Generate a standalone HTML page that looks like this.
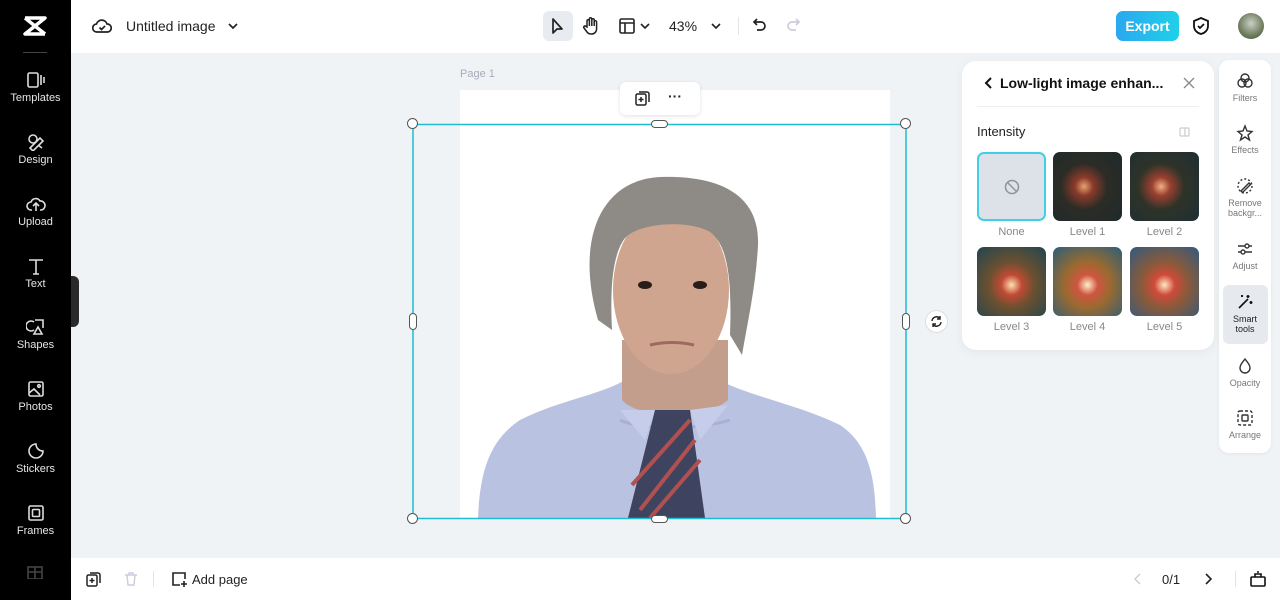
<!DOCTYPE html>
<html><head><meta charset="utf-8"><style>
*{box-sizing:border-box;margin:0;padding:0}
body{width:1280px;height:600px;overflow:hidden;font-family:"Liberation Sans",sans-serif;background:#f0f3f6;position:relative;color:#1f2329}
.abs{position:absolute}
.side{left:0;top:0;width:71px;height:600px;background:#000}
.si{position:absolute;left:0;width:71px;text-align:center;color:#e6e6e6;font-size:11px}
.si svg{display:block;margin:0 auto 3px}
.top{left:71px;top:0;width:1209px;height:53px;background:#fff}
.bot{left:71px;top:558px;width:1209px;height:42px;background:#fff}
.rp{left:1219px;top:60px;width:52px;height:393px;background:#fff;border-radius:10px;box-shadow:0 1px 4px rgba(0,0,0,.06)}
.ri{position:absolute;left:0;width:52px;text-align:center;font-size:9px;color:#777;line-height:10px}
.ri svg{display:block;margin:0 auto 3px}
.panel{left:962px;top:61px;width:252px;height:289px;background:#fff;border-radius:14px;box-shadow:0 2px 10px rgba(0,0,0,.06)}
.th{position:absolute;width:69px;height:69px;border-radius:7px;overflow:hidden}
.lbl{position:absolute;width:69px;text-align:center;font-size:11px;color:#888}
.h{position:absolute;width:11px;height:11px;border-radius:50%;background:#fff;border:1px solid #555}
</style></head><body>
<div class="abs side">
 <svg class="abs" style="left:22px;top:15px" width="26" height="22" viewBox="0 0 26 22"><path d="M3 3h20L3 19h20M3 3l20 16" stroke="#fff" stroke-width="3.5" fill="none" stroke-linejoin="round"/></svg>
 <div class="abs" style="left:23px;top:52px;width:24px;height:1px;background:#444"></div>
 <div class="si" style="top:71px"><svg width="20" height="18" viewBox="0 0 20 18" fill="none" stroke="#ddd" stroke-width="1.6"><rect x="2" y="2" width="10" height="14" rx="1.5"/><path d="M15 4v10M18 6v6"/></svg>Templates</div>
 <div class="si" style="top:133px"><svg width="20" height="18" viewBox="0 0 20 18" fill="none" stroke="#ddd" stroke-width="1.6"><circle cx="7" cy="6" r="4"/><path d="M4 15l10-10 3 3-10 10zM12 12l4 3"/></svg>Design</div>
 <div class="si" style="top:195px"><svg width="20" height="18" viewBox="0 0 20 18" fill="none" stroke="#ddd" stroke-width="1.6"><path d="M6 15H5a4 4 0 010-8 5 5 0 019-1 4 4 0 011 9h-1M10 16V9M7 11l3-3 3 3"/></svg>Upload</div>
 <div class="si" style="top:257px"><svg width="20" height="18" viewBox="0 0 20 18" fill="none" stroke="#ddd" stroke-width="1.6"><path d="M3 3h14M10 3v14M7 17h6"/></svg>Text</div>
 <div class="si" style="top:318px"><svg width="20" height="18" viewBox="0 0 20 18" fill="none" stroke="#ddd" stroke-width="1.6"><path d="M8 4a5 5 0 100 8M9 2h8v8M12 9l-4 7h8z"/></svg>Shapes</div>
 <div class="si" style="top:380px"><svg width="20" height="18" viewBox="0 0 20 18" fill="none" stroke="#ddd" stroke-width="1.6"><rect x="3" y="2" width="14" height="14" rx="1.5"/><path d="M3 13l5-4 6 6"/><circle cx="13" cy="6" r="1.3"/></svg>Photos</div>
 <div class="si" style="top:442px"><svg width="20" height="18" viewBox="0 0 20 18" fill="none" stroke="#ddd" stroke-width="1.6"><path d="M17 9a7 7 0 11-7-7c0 4 3 7 7 7z"/></svg>Stickers</div>
 <div class="si" style="top:504px"><svg width="20" height="18" viewBox="0 0 20 18" fill="none" stroke="#ddd" stroke-width="1.6"><rect x="3" y="2" width="14" height="14" rx="1.5"/><rect x="6.5" y="5.5" width="7" height="7" rx="1"/></svg>Frames</div>
 <svg class="abs" style="left:26px;top:565px" width="18" height="14" viewBox="0 0 18 14" fill="none" stroke="#444" stroke-width="1.6"><rect x="2" y="2" width="14" height="12"/><path d="M9 2v12M2 7h14"/></svg>
</div>
<div class="abs" style="left:71px;top:276px;width:8px;height:51px;background:#2a2a2a;border-radius:0 6px 6px 0"></div>

<div class="abs top">
 <svg class="abs" style="left:21px;top:17px" width="20" height="18" viewBox="0 0 20 18" fill="none" stroke="#222" stroke-width="1.7"><path d="M5 15a4 4 0 01-.5-8 5.5 5.5 0 0110.5 0 4 4 0 01.5 8z"/><path d="M7.5 10.5l2 2 3.5-3.5"/></svg>
 <div class="abs" style="left:55px;top:18px;font-size:14px;color:#222">Untitled image</div>
 <svg class="abs" style="left:156px;top:20px" width="12" height="12" viewBox="0 0 12 12"><path d="M2 4l4 4 4-4" stroke="#222" stroke-width="1.7" fill="none"/></svg>
 <div class="abs" style="left:472px;top:11px;width:30px;height:30px;background:#e8ecf0;border-radius:6px"></div>
 <svg class="abs" style="left:478px;top:16px" width="18" height="20" viewBox="0 0 18 20"><path d="M4 3v14l4-4 5 0z" stroke="#222" stroke-width="1.7" fill="none" stroke-linejoin="round"/></svg>
 <svg class="abs" style="left:511px;top:16px" width="18" height="20" viewBox="0 0 18 20" fill="none" stroke="#222" stroke-width="1.5"><path d="M5 11V5a1.2 1.2 0 012.4 0v5V3a1.2 1.2 0 012.4 0v7V4a1.2 1.2 0 012.4 0v6V6a1.2 1.2 0 012.4 0v7a5 5 0 01-5 5H9a5 5 0 01-4-2l-3-4a1.2 1.2 0 012-1.5z"/></svg>
 <svg class="abs" style="left:547px;top:17px" width="18" height="18" viewBox="0 0 18 18" fill="none" stroke="#222" stroke-width="1.6"><rect x="2" y="2" width="14" height="14" rx="1.5"/><path d="M2 6h14M7 6v10"/></svg>
 <svg class="abs" style="left:568px;top:20px" width="12" height="12" viewBox="0 0 12 12"><path d="M2 4l4 4 4-4" stroke="#222" stroke-width="1.6" fill="none"/></svg>
 <div class="abs" style="left:598px;top:18px;font-size:14px;color:#222">43%</div>
 <svg class="abs" style="left:639px;top:20px" width="12" height="12" viewBox="0 0 12 12"><path d="M2 4l4 4 4-4" stroke="#222" stroke-width="1.6" fill="none"/></svg>
 <div class="abs" style="left:667px;top:17px;width:1px;height:18px;background:#e2e4e8"></div>
 <svg class="abs" style="left:680px;top:16px" width="18" height="18" viewBox="0 0 18 18" fill="none" stroke="#222" stroke-width="1.7"><path d="M6 3L3 6l3 3M3 6h7a4 4 0 010 8H6"/></svg>
 <svg class="abs" style="left:713px;top:16px" width="18" height="18" viewBox="0 0 18 18" fill="none" stroke="#ccd" stroke-width="1.7"><path d="M12 3l3 3-3 3M15 6H8a4 4 0 000 8h4"/></svg>
 <div class="abs" style="left:1045px;top:11px;width:63px;height:30px;border-radius:7px;background:linear-gradient(90deg,#2aa8f0,#20d0e8);color:#fff;font-weight:bold;font-size:14px;text-align:center;line-height:30px">Export</div>
 <svg class="abs" style="left:1120px;top:16px" width="20" height="20" viewBox="0 0 20 20" fill="none" stroke="#111" stroke-width="1.8"><path d="M10 2l7 3v5c0 4-3 7-7 8-4-1-7-4-7-8V5z"/><path d="M7 10l2 2 4-4"/></svg>
 <div class="abs" style="left:1167px;top:13px;width:26px;height:26px;border-radius:50%;background:radial-gradient(circle at 50% 40%,#c9d0c4,#6f7d5e 60%,#44503a)"></div>
</div>

<div class="abs" style="left:460px;top:68px;font-size:11px;color:#aab">Page 1</div>
<div class="abs" style="left:460px;top:90px;width:430px;height:428px;background:#fff"></div>
<svg class="abs" style="left:0;top:0" width="1280" height="600" viewBox="0 0 1280 600">
 <path d="M478 518 C480 470 490 440 520 420 C560 400 600 395 625 380 L720 380 C745 395 800 405 840 425 C870 445 875 480 876 518 Z" fill="#b9c2e0"/>
 <path d="M620 420 C640 430 700 430 730 420" stroke="#a9b1d2" stroke-width="3" fill="none"/>
 <path d="M622 340 L622 400 C640 420 705 420 728 400 L728 340 Z" fill="#c49e8c"/>
 <ellipse cx="671" cy="290" rx="58" ry="84" fill="#d0a58f"/>
 <path d="M598 320 C575 240 600 180 660 177 C720 175 760 195 758 245 C756 285 748 320 742 355 L730 335 C732 280 728 245 710 232 C690 220 640 222 625 238 C612 255 610 290 612 330 Z" fill="#8e8a85"/>
 <path d="M655 410 L690 410 L705 518 L628 518 Z" fill="#3e4460"/>
 <path d="M640 510 L695 440 M650 518 L700 460 M632 485 L690 420" stroke="#b05050" stroke-width="4"/>
 <path d="M620 410 L655 410 L645 440 Z M690 410 L728 405 L700 440 Z" fill="#c6cdea"/>
 <ellipse cx="645" cy="285" rx="7" ry="4" fill="#2a1c18"/><ellipse cx="700" cy="285" rx="7" ry="4" fill="#2a1c18"/>
 <path d="M650 345 Q672 340 694 345" stroke="#9c6b5d" stroke-width="3" fill="none"/>
 <rect x="413" y="124.5" width="493" height="394" fill="none" stroke="#1fbcd2" stroke-width="1.5"/>
</svg>
<div class="h" style="left:407px;top:118px"></div><div class="h" style="left:900px;top:118px"></div>
<div class="h" style="left:407px;top:513px"></div><div class="h" style="left:900px;top:513px"></div>
<div class="abs" style="left:651px;top:120px;width:17px;height:8px;border-radius:4px;background:#fff;border:1px solid #555"></div>
<div class="abs" style="left:651px;top:515px;width:17px;height:8px;border-radius:4px;background:#fff;border:1px solid #555"></div>
<div class="abs" style="left:409px;top:313px;width:8px;height:17px;border-radius:4px;background:#fff;border:1px solid #555"></div>
<div class="abs" style="left:902px;top:313px;width:8px;height:17px;border-radius:4px;background:#fff;border:1px solid #555"></div>
<div class="abs" style="left:925px;top:310px;width:23px;height:23px;border-radius:50%;background:#fff;border:1px solid #ddd"></div>
<svg class="abs" style="left:929px;top:314px" width="15" height="15" viewBox="0 0 15 15" fill="none" stroke="#222" stroke-width="1.4"><path d="M3 7a4.5 4.5 0 018-2.5M12 8a4.5 4.5 0 01-8 2.5M11 2v3H8M4 13v-3h3"/></svg>
<div class="abs" style="left:620px;top:82px;width:80px;height:33px;background:#fff;border-radius:6px;box-shadow:0 1px 4px rgba(0,0,0,.12)"></div>
<svg class="abs" style="left:634px;top:89px" width="18" height="18" viewBox="0 0 18 18" fill="none" stroke="#222" stroke-width="1.5"><rect x="2" y="5" width="10" height="11" rx="1.5"/><path d="M5 3h8a2 2 0 012 2v8M7 8v5M4.5 10.5h5"/></svg>
<div class="abs" style="left:668px;top:88px;font-size:14px;font-weight:bold">···</div>

<div class="abs panel">
 <svg class="abs" style="left:21px;top:15px" width="12" height="14" viewBox="0 0 12 14"><path d="M8 2L3 7l5 5" stroke="#111" stroke-width="2" fill="none"/></svg>
 <div class="abs" style="left:38px;top:14px;font-size:14px;font-weight:bold;color:#111">Low-light image enhan...</div>
 <svg class="abs" style="left:221px;top:16px" width="12" height="12" viewBox="0 0 12 12"><path d="M1 1l10 10M11 1L1 11" stroke="#888" stroke-width="1.3"/></svg>
 <div class="abs" style="left:15px;top:45px;width:222px;height:1px;background:#eceef0"></div>
 <div class="abs" style="left:15px;top:63px;font-size:13px;color:#222">Intensity</div>
 <svg class="abs" style="left:216px;top:64px" width="14" height="14" viewBox="0 0 14 14" fill="none" stroke="#ccc" stroke-width="1.2"><rect x="2" y="3" width="9" height="8" rx="1"/><path d="M7 3v8"/></svg>
 <div class="th" style="left:15px;top:91px;background:#dde2e8;border:2px solid #3ed0e6"><svg style="position:absolute;left:24px;top:24px" width="18" height="18" viewBox="0 0 18 18" fill="none" stroke="#8b939e" stroke-width="1.5"><circle cx="9" cy="9" r="6.5"/><path d="M4.5 4.5l9 9"/></svg></div>
 <div class="th" style="left:91px;top:91px;background:radial-gradient(circle at 45% 50%,#e8a070 0,#8a3a2a 18%,#2c2c26 45%,#1e2a2c 100%)"></div>
 <div class="th" style="left:168px;top:91px;background:radial-gradient(circle at 45% 50%,#f0b080 0,#9a4030 18%,#2e3328 45%,#1e2e33 100%)"></div>
 <div class="th" style="left:15px;top:186px;background:radial-gradient(circle at 50% 55%,#ffe0b0 0,#c04a34 20%,#6a5030 45%,#1f4650 100%)"></div>
 <div class="th" style="left:91px;top:186px;background:radial-gradient(circle at 50% 55%,#fff0c8 0,#d05540 20%,#9a6a30 45%,#2a5e78 100%)"></div>
 <div class="th" style="left:168px;top:186px;background:radial-gradient(circle at 50% 55%,#ffe8c0 0,#d04a3a 20%,#8a5a3a 45%,#305a80 100%)"></div>
 <div class="lbl" style="left:15px;top:165px">None</div><div class="lbl" style="left:91px;top:165px">Level 1</div><div class="lbl" style="left:168px;top:165px">Level 2</div>
 <div class="lbl" style="left:15px;top:260px">Level 3</div><div class="lbl" style="left:91px;top:260px">Level 4</div><div class="lbl" style="left:168px;top:260px">Level 5</div>
</div>

<div class="abs rp">
 <div class="ri" style="top:12px"><svg width="18" height="18" viewBox="0 0 18 18" fill="none" stroke="#333" stroke-width="1.4"><circle cx="9" cy="6" r="4"/><circle cx="6" cy="11" r="4"/><circle cx="12" cy="11" r="4"/></svg>Filters</div>
 <div class="ri" style="top:64px"><svg width="18" height="18" viewBox="0 0 18 18" fill="none" stroke="#333" stroke-width="1.4"><path d="M9 2l2 5 5 .5-4 3.5 1.5 5L9 13l-4.5 3L6 11 2 7.5 7 7z"/></svg>Effects</div>
 <div class="ri" style="top:117px"><svg width="18" height="18" viewBox="0 0 18 18" fill="none" stroke="#333" stroke-width="1.4"><circle cx="9" cy="9" r="7" stroke-dasharray="2 2"/><path d="M5 14l8-8 1.5 1.5-8 8z"/></svg>Remove<br>backgr...</div>
 <div class="ri" style="top:180px"><svg width="18" height="18" viewBox="0 0 18 18" fill="none" stroke="#333" stroke-width="1.4"><path d="M2 6h14M2 12h14"/><circle cx="11" cy="6" r="2" fill="#fff"/><circle cx="7" cy="12" r="2" fill="#fff"/></svg>Adjust</div>
 <div class="abs" style="left:4px;top:225px;width:45px;height:59px;background:#e6eaee;border-radius:6px"></div>
 <div class="ri" style="top:233px"><svg width="18" height="18" viewBox="0 0 18 18" fill="none" stroke="#111" stroke-width="1.6"><path d="M3 15l9-9"/><path d="M12 2v3M10.5 3.5h3M15 8v3M13.5 9.5h3M6 2v2M5 3h2"/></svg><span style="color:#222">Smart<br>tools</span></div>
 <div class="ri" style="top:297px"><svg width="18" height="18" viewBox="0 0 18 18" fill="none" stroke="#333" stroke-width="1.4"><path d="M9 2c3 4 5 6 5 9a5 5 0 01-10 0c0-3 2-5 5-9z"/></svg>Opacity</div>
 <div class="ri" style="top:349px"><svg width="18" height="18" viewBox="0 0 18 18" fill="none" stroke="#333" stroke-width="1.4"><rect x="2" y="2" width="14" height="14" rx="2" stroke-dasharray="3 2"/><rect x="6" y="6" width="6" height="6" rx="1"/></svg>Arrange</div>
</div>

<div class="abs bot">
 <svg class="abs" style="left:14px;top:12px" width="18" height="18" viewBox="0 0 18 18" fill="none" stroke="#222" stroke-width="1.5"><rect x="2" y="5" width="10" height="11" rx="1.5"/><path d="M5 3h8a2 2 0 012 2v8M7 8v5M4.5 10.5h5"/></svg>
 <svg class="abs" style="left:52px;top:13px" width="16" height="16" viewBox="0 0 16 16" fill="none" stroke="#ccd" stroke-width="1.4"><path d="M2 4h12M6 4V2h4v2M4 4l1 10h6l1-10"/></svg>
 <div class="abs" style="left:82px;top:13px;width:1px;height:16px;background:#e2e4e8"></div>
 <svg class="abs" style="left:99px;top:12px" width="18" height="18" viewBox="0 0 18 18" fill="none" stroke="#222" stroke-width="1.6"><path d="M10 15H3V3h12v6M14 11v6M11 14h6"/></svg>
 <div class="abs" style="left:121px;top:14px;font-size:13px;color:#222">Add page</div>
 <svg class="abs" style="left:1061px;top:13px" width="12" height="16" viewBox="0 0 12 16"><path d="M8 3L3 8l5 5" stroke="#ccc" stroke-width="1.4" fill="none"/></svg>
 <div class="abs" style="left:1091px;top:14px;font-size:13px;color:#222">0/1</div>
 <svg class="abs" style="left:1131px;top:13px" width="12" height="16" viewBox="0 0 12 16"><path d="M4 3l5 5-5 5" stroke="#222" stroke-width="1.6" fill="none"/></svg>
 <div class="abs" style="left:1164px;top:13px;width:1px;height:16px;background:#e2e4e8"></div>
 <svg class="abs" style="left:1178px;top:12px" width="18" height="18" viewBox="0 0 18 18" fill="none" stroke="#111" stroke-width="1.6"><rect x="2" y="7" width="14" height="9" rx="1"/><path d="M6 7V4h6v3M8 2h2"/></svg>
</div>
</body></html>
